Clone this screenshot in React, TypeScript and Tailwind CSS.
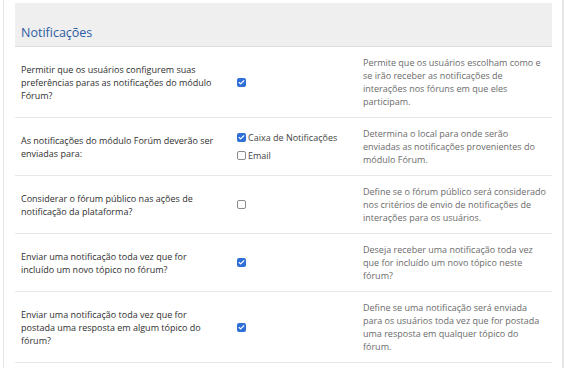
import { Check } from 'lucide-react';

type Row = {
  label: string;
  description: string;
  options?: { label: string; checked: boolean }[];
  checked?: boolean;
};

const rows: Row[] = [
  {
    label: 'Permitir que os usuários configurem suas preferências paras as notificações do módulo Fórum?',
    checked: true,
    description:
      'Permite que os usuários escolham como e se irão receber as notificações de interações nos fóruns em que eles participam.',
  },
  {
    label: 'As notificações do módulo Forúm deverão ser enviadas para:',
    options: [
      { label: 'Caixa de Notificações', checked: true },
      { label: 'Email', checked: false },
    ],
    description: 'Determina o local para onde serão enviadas as notificações provenientes do módulo Fórum.',
  },
  {
    label: 'Considerar o fórum público nas ações de notificação da plataforma?',
    checked: false,
    description:
      'Define se o fórum público será considerado nos critérios de envio de notificações de interações para os usuários.',
  },
  {
    label: 'Enviar uma notificação toda vez que for incluído um novo tópico no fórum?',
    checked: true,
    description: 'Deseja receber uma notificação toda vez que for incluído um novo tópico neste fórum?',
  },
  {
    label: 'Enviar uma notificação toda vez que for postada uma resposta em algum tópico do fórum?',
    checked: true,
    description:
      'Define se uma notificação será enviada para os usuários toda vez que for postada uma resposta em qualquer tópico do fórum.',
  },
];

function Box({ checked }: { checked: boolean }) {
  if (checked) {
    return (
      <span className="inline-flex w-[9px] h-[9px] rounded-[2px] bg-[#2f6fd8] items-center justify-center shrink-0">
        <Check className="w-[7px] h-[7px] text-white" strokeWidth={4} />
      </span>
    );
  }
  return <span className="inline-block w-[9px] h-[9px] rounded-[2px] border border-[#8a8a8a] bg-white shrink-0" />;
}

export default function App() {
  return (
    <div
      className="w-[570px] h-[368px] bg-white overflow-hidden"
      style={{ fontFamily: '"Open Sans", sans-serif' }}
    >
      <div className="ml-[3px] w-[561px] h-full border-l border-r-2 border-[#e6e6e6] pl-[11px] pr-[10px] pt-[3px]">
        {/* Section header */}
        <div className="h-[44px] bg-[#efefef] border-b border-[#dcdcdc] flex items-end px-[6px] pb-[5px]">
          <h2 className="text-[12.5px] leading-[16px] text-[#2c5ca3]">Notificações</h2>
        </div>

        {rows.map((row, i) => (
          <div
            key={i}
            className="grid grid-cols-[216px_126px_1fr] border-b border-[#e8e8e8] text-[9px] leading-[13px]"
          >
            <div className="px-[6px] py-[9px] flex items-center text-[#2f2f2f]">
              <span className="pr-[4px]">{row.label}</span>
            </div>
            <div className="px-[6px] py-[9px] flex items-center">
              {row.options ? (
                <div className="flex flex-col gap-[5px] text-[#444]">
                  {row.options.map((opt) => (
                    <label key={opt.label} className="flex items-center gap-[2px]">
                      <Box checked={opt.checked} />
                      {opt.label}
                    </label>
                  ))}
                </div>
              ) : (
                <Box checked={!!row.checked} />
              )}
            </div>
            <div className="px-[6px] py-[9px] text-[#6b6b6b]">{row.description}</div>
          </div>
        ))}
      </div>
    </div>
  );
}
